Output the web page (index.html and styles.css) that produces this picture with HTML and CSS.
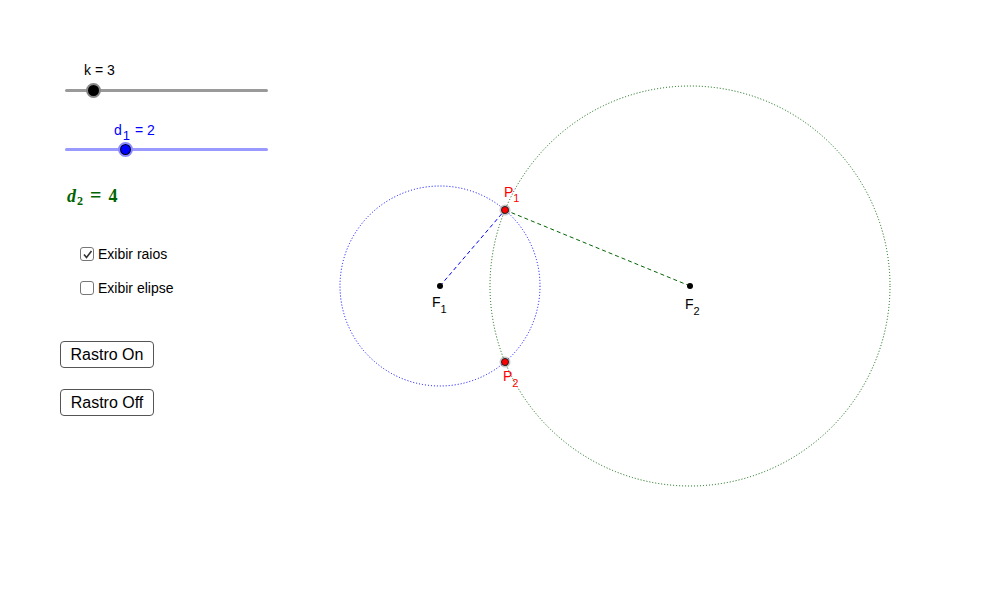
FILE: index.html
```html
<!DOCTYPE html>
<html>
<head>
<meta charset="utf-8">
<link rel="stylesheet" href="styles.css">
</head>
<body>
<div class="app">
  <svg class="canvas" width="1004" height="612" viewBox="0 0 1004 612">
    <circle cx="440" cy="286" r="100" class="c-blue"/>
    <circle cx="690" cy="286" r="200" class="c-green"/>
    <line x1="440" y1="286" x2="505" y2="210" class="l-blue"/>
    <line x1="505" y1="210" x2="690" y2="286" class="l-green"/>
    <circle cx="440" cy="286" r="3" class="pt-black"/>
    <circle cx="690" cy="286" r="3" class="pt-black"/>
    <circle cx="505" cy="210" r="5.5" class="halo"/>
    <circle cx="505" cy="210" r="3.5" class="pt-red"/>
    <circle cx="505" cy="362" r="5.5" class="halo"/>
    <circle cx="505" cy="362" r="3.5" class="pt-red"/>
    <text x="432" y="307" class="lbl">F<tspan dy="6" class="sub">1</tspan></text>
    <text x="685" y="309" class="lbl">F<tspan dy="6" class="sub">2</tspan></text>
    <text x="504" y="197" class="lbl red">P<tspan dy="5" class="sub">1</tspan></text>
    <text x="503" y="381" class="lbl red">P<tspan dy="6" class="sub">2</tspan></text>
  </svg>

  <div class="panel">
    <div class="slider">
      <div class="slider-label k-label">k = 3</div>
      <div class="track track-gray">
        <span class="knob knob-gray" style="left: 29px"></span>
      </div>
    </div>
    <div class="slider slider-2">
      <div class="slider-label d-label">d<span class="lsub">1</span> = 2</div>
      <div class="track track-blue">
        <span class="knob knob-blue" style="left: 61px"></span>
      </div>
    </div>
    <div class="formula"><i>d</i><span class="fsub">2</span><span class="eq">=</span>4</div>
    <label class="check check-1"><span class="box checked"><svg width="11" height="11" viewBox="0 0 11 11"><path d="M2 5.5 L4.5 8.5 L9.5 2" fill="none" stroke="#333" stroke-width="1.6"/></svg></span>Exibir raios</label>
    <label class="check check-2"><span class="box"></span>Exibir elipse</label>
    <button class="btn btn-1">Rastro On</button>
    <button class="btn btn-2">Rastro Off</button>
  </div>
</div>
</body>
</html>
```

FILE: styles.css
```css
html, body {
  margin: 0;
  padding: 0;
  background: #ffffff;
}
.app {
  position: relative;
  width: 1004px;
  height: 612px;
  overflow: hidden;
  background: #ffffff;
  font-family: "Liberation Sans", Arial, sans-serif;
}
.canvas {
  position: absolute;
  left: 0;
  top: 0;
}
.c-blue {
  fill: none;
  stroke: #0000ff;
  stroke-width: 1;
  stroke-dasharray: 1 2;
}
.c-green {
  fill: none;
  stroke: #006400;
  stroke-width: 1;
  stroke-dasharray: 1 2;
}
.l-blue {
  stroke: #0000ff;
  stroke-width: 1;
  stroke-dasharray: 4 3;
}
.l-green {
  stroke: #006400;
  stroke-width: 1;
  stroke-dasharray: 4 3;
}
.pt-black { fill: #000; }
.halo { fill: rgba(0,0,0,0.22); }
.pt-red { fill: #ff0000; stroke: #222; stroke-width: 1; }
.lbl {
  font-family: "Liberation Sans", Arial, sans-serif;
  font-size: 14px;
  fill: #000;
}
.lbl.red { fill: #ff0000; }
.sub { font-size: 11px; }

.panel {
  position: relative;
  display: flex;
  flex-direction: column;
  align-items: flex-start;
  padding-top: 62px;
}
.slider {
  margin-left: 65px;
  width: 203px;
}
.slider-2 { margin-top: 30px; }
.slider-label {
  height: 16px;
  line-height: 16px;
  font-size: 14px;
  white-space: nowrap;
}
.k-label { padding-left: 19px; color: #000; }
.d-label { padding-left: 49px; color: #0000ff; }
.lsub {
  font-size: 13px;
  position: relative;
  top: 5px;
  margin-left: 1px;
  margin-right: 1px;
}
.track {
  position: relative;
  height: 3px;
  border-radius: 2px;
  margin-top: 11px;
}
.slider-2 .track { margin-top: 10px; }
.track-gray { background: #9a9a9a; }
.track-blue { background: #9999ff; }
.knob {
  position: absolute;
  top: -6px;
  width: 11px;
  height: 11px;
  margin-left: -8px;
  border-radius: 50%;
  border: 2.5px solid;
}
.knob-gray {
  background: #000;
  border-color: #888888;
}
.knob-blue {
  background: #0000ff;
  border-color: #8c8cff;
  box-shadow: inset 0 0 0 1px #000;
}
.formula {
  display: flex;
  align-items: baseline;
  margin-top: 33px;
  margin-left: 67px;
  height: 22px;
  line-height: 22px;
  font-family: "Liberation Serif", "Times New Roman", serif;
  font-weight: bold;
  font-size: 18px;
  color: #006400;
  white-space: nowrap;
}
.formula i { font-style: italic; margin-right: 1px; }
.fsub {
  font-size: 12px;
  position: relative;
  top: 3px;
}
.eq {
  margin: 0 7px 0 7px;
  font-size: 20px;
}
.check {
  display: flex;
  align-items: center;
  gap: 4px;
  height: 20px;
  margin-left: 80px;
  font-size: 14px;
  color: #000;
}
.check-1 { margin-top: 38px; }
.check-2 { margin-top: 14px; }
.box {
  box-sizing: border-box;
  width: 14px;
  height: 14px;
  border: 1px solid #767676;
  border-radius: 3px;
  background: #fff;
  display: flex;
  align-items: center;
  justify-content: center;
}
.btn {
  box-sizing: border-box;
  width: 94px;
  height: 27px;
  margin-left: 60px;
  padding: 0;
  border: 1px solid #555;
  border-radius: 4px;
  background: #fff;
  font-family: "Liberation Sans", Arial, sans-serif;
  font-size: 16px;
  color: #000;
}
.btn-1 { margin-top: 43px; }
.btn-2 { margin-top: 21px; }
```
